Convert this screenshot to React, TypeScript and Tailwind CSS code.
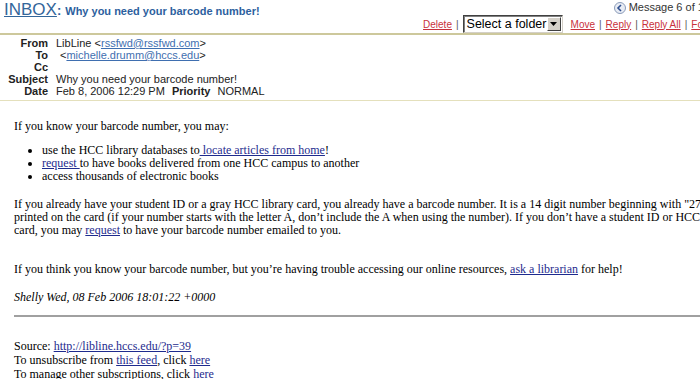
import React from 'react';

const sans = "font-['Liberation_Sans',Arial,sans-serif]";
const serif = "font-['Liberation_Serif','Times_New_Roman',serif]";

function FolderSelect() {
  return (
    <div className="flex h-[18px] w-[100px] items-center border border-t-[#404040] border-l-[#404040] border-b-[#d4d0c8] border-r-[#d4d0c8] bg-white shadow-[inset_1px_1px_0_#808080]">
      <span className="flex-1 whitespace-nowrap pl-[3px] text-[12.5px] leading-none text-black">Select a folder</span>
      <span className="mr-[1px] flex h-[14px] w-[14px] shrink-0 items-center justify-center border border-t-white border-l-white border-b-[#404040] border-r-[#404040] bg-[#d4d0c8]">
        <svg width="7" height="4" viewBox="0 0 7 4">
          <path d="M0 0h7L3.5 4z" fill="#000" />
        </svg>
      </span>
    </div>
  );
}

function Sep() {
  return <span className="px-[4px] text-[#555]">|</span>;
}

function Arrow({ dir }: { dir: 'prev' | 'next' }) {
  return (
    <svg width="12" height="12" viewBox="0 0 12 12">
      <circle cx="6" cy="6" r="5.5" fill="#e8ecf4" stroke="#8a9bb8" />
      <path
        d={dir === 'prev' ? 'M7 3L4 6l3 3' : 'M5 3l3 3-3 3'}
        fill="none"
        stroke="#2f4f8f"
        strokeWidth="1.6"
      />
    </svg>
  );
}

export default function App() {
  const redLink = 'text-[#c8313b] underline';
  const bodyLink = 'text-[#1e2b8e] underline';

  return (
    <div className="h-[379px] w-[700px] overflow-hidden bg-white">
      <div className="w-[800px]">
        {/* top bar */}
        <div className={`flex w-[735px] items-start justify-between pl-[4px] pr-[7px] ${sans}`}>
          <div className="flex items-baseline pt-[1px]">
            <span className="text-[17px] leading-[18px] text-[#33669a] underline">INBOX</span>
            <span className="text-[13px] font-bold text-[#2d5f9e]">:</span>
            <span className="ml-[4px] text-[11px] font-bold text-[#2d5f9e]">Why you need your barcode number!</span>
          </div>
          <div className="flex flex-col items-end">
            <div className="flex h-[14px] items-center gap-[3px] pt-[1px] text-[11px] text-[#333]">
              <Arrow dir="prev" />
              <span>Message 6 of 10</span>
              <span className="ml-[3px]">
                <Arrow dir="next" />
              </span>
            </div>
            <div className="mt-[1px] flex h-[18px] items-center text-[10px]">
              <a className={redLink}>Delete</a>
              <Sep />
              <FolderSelect />
              <a className={`${redLink} ml-[8px]`}>Move</a>
              <Sep />
              <a className={redLink}>Reply</a>
              <Sep />
              <a className={redLink}>Reply All</a>
              <Sep />
              <a className={redLink}>Forward</a>
            </div>
          </div>
        </div>

        <div className="h-[2px] bg-[#cdc89c]" />

        {/* headers */}
        <div className={`grid grid-cols-[48px_1fr] gap-x-[8px] pt-[2px] pb-[3px] text-[11px] leading-[12px] text-[#222] ${sans}`}>
          <span className="text-right font-bold">From</span>
          <span>
            LibLine &lt;<a className="text-[#3f6fb0] underline">rssfwd@rssfwd.com</a>&gt;
          </span>
          <span className="text-right font-bold">To</span>
          <span className="pl-[4px]">
            &lt;<a className="text-[#3f6fb0] underline">michelle.drumm@hccs.edu</a>&gt;
          </span>
          <span className="text-right font-bold">Cc</span>
          <span />
          <span className="text-right font-bold">Subject</span>
          <span>Why you need your barcode number!</span>
          <span className="text-right font-bold">Date</span>
          <span>
            Feb 8, 2006 12:29 PM <span className="ml-[4px] mr-[4px] font-bold">Priority</span> NORMAL
          </span>
        </div>

        <div className="h-[1px] bg-[#e4e0bc]" />

        {/* body */}
        <div className={`pl-[14px] pt-[19px] text-[12px] leading-[13px] text-black ${serif}`}>
          <p>If you know your barcode number, you may:</p>
          <ul className="mt-[11px] list-disc pl-[28px]">
            <li>
              use the HCC library databases to<a className={bodyLink}> locate articles from home</a>!
            </li>
            <li>
              <a className={bodyLink}>request </a>to have books delivered from one HCC campus to another
            </li>
            <li>access thousands of electronic books</li>
          </ul>
          <p className="mt-[15px] whitespace-nowrap">
            If you already have your student ID or a gray HCC library card, you already have a barcode number. It is a
            14 digit number beginning with "275…"
            <br />
            printed on the card (if your number starts with the letter A, don’t include the A when using the number). If
            you don’t have a student ID or HCC library
            <br />
            card, you may <a className={bodyLink}>request</a> to have your barcode number emailed to you.
          </p>
          <p className="mt-[26px]">
            If you think you know your barcode number, but you’re having trouble accessing our online resources,{' '}
            <a className={bodyLink}>ask a librarian</a> for help!
          </p>
          <p className="mt-[15px] italic">Shelly Wed, 08 Feb 2006 18:01:22 +0000</p>
          <hr className="mt-[11px] border-t-2 border-[#a0a0a0]" />
          <div className="mt-[22px] leading-[14px]">
            <div>
              Source: <a className={bodyLink}>http://libline.hccs.edu/?p=39</a>
            </div>
            <div>
              To unsubscribe from <a className={bodyLink}>this feed</a>, click <a className={bodyLink}>here</a>
            </div>
            <div>
              To manage other subscriptions, click <a className={bodyLink}>here</a>
            </div>
          </div>
        </div>
      </div>
    </div>
  );
}
